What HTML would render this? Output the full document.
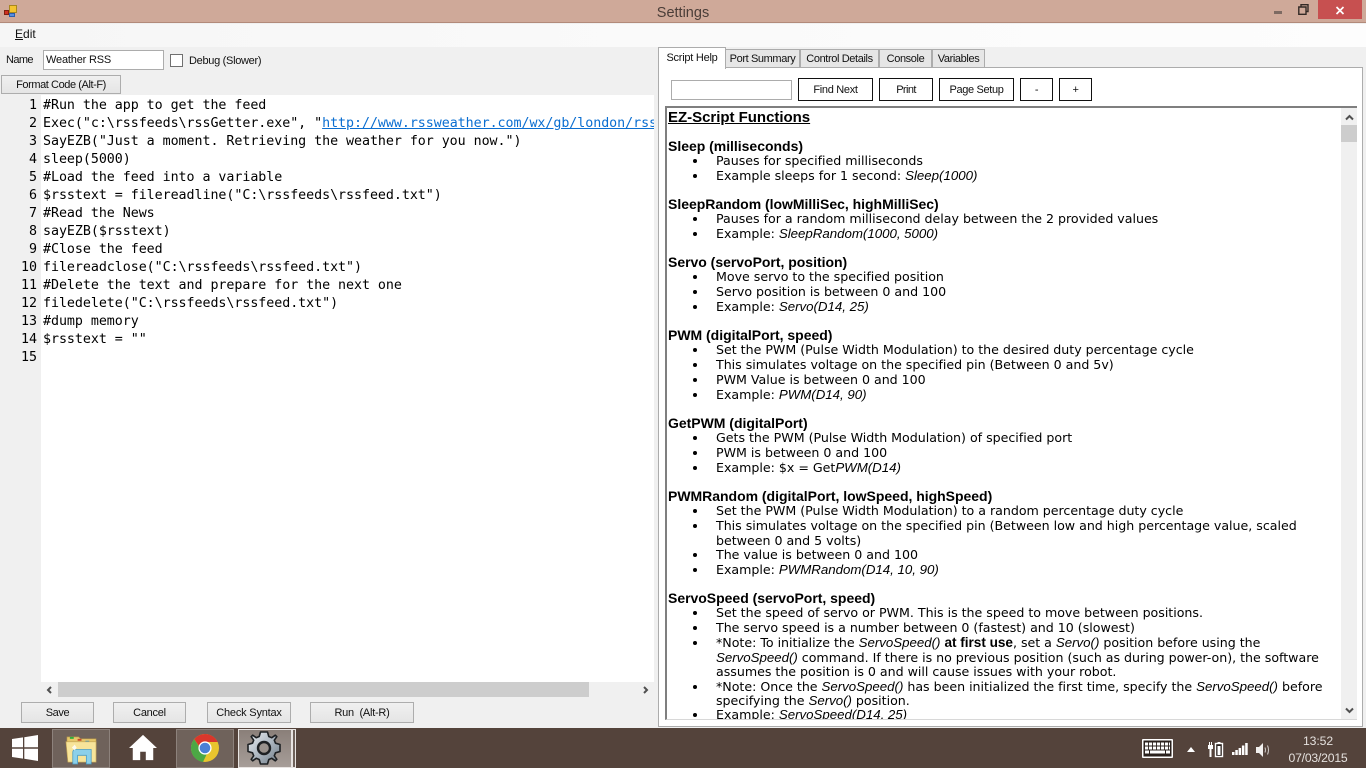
<!DOCTYPE html>
<html><head><meta charset="utf-8"><title>Settings</title>
<style>
html,body{margin:0;padding:0;width:1366px;height:768px;overflow:hidden;background:#f0f0f0}
body{position:relative;font-family:"Liberation Sans",sans-serif;font-size:11px;color:#111}
div{box-sizing:border-box}
.r{position:absolute}
.u{position:absolute;white-space:nowrap;letter-spacing:-.3px;line-height:14px;height:14px}
.b{position:absolute;box-sizing:border-box;border:1px solid #adadad;background:linear-gradient(#f0f0f0,#e5e5e5);text-align:center;white-space:nowrap;letter-spacing:-.25px;font-size:11px;line-height:21px;color:#111}
.k{position:absolute;box-sizing:border-box;border:1px solid #111;background:#fff;text-align:center;white-space:nowrap;letter-spacing:-.3px;line-height:22px;height:23px;top:78px}
.tab{position:absolute;box-sizing:border-box;top:49px;height:19px;border:1px solid #acacac;background:#e6e6e6;text-align:center;letter-spacing:-.38px;line-height:19px;white-space:nowrap}
.c{position:absolute;left:43px;font:13.33px/18px "DejaVu Sans Mono",monospace;letter-spacing:-.05px;white-space:pre;color:#000;height:18px}
.n{position:absolute;left:0;width:37px;text-align:right;font:13.33px/18px "DejaVu Sans Mono",monospace;color:#000}
#help{position:absolute;left:663px;top:108px;width:678px;height:611px;overflow:hidden}
#help div{position:absolute;white-space:nowrap;font:12.63px/15px "DejaVu Sans",sans-serif;color:#000;letter-spacing:-.02px}
#help .h{left:5px;font-family:"Liberation Sans",sans-serif;font-weight:bold;font-size:14px}
#help .l{left:53px}
#help .d{left:5px}
#help .d:before{content:"";position:absolute;left:25px;top:6px;width:4px;height:4px;border-radius:50%;background:#000}
#help .d span{margin-left:48px}
#help i{font-family:"Liberation Sans",sans-serif;font-size:13.3px}
#help b{font-family:"Liberation Sans",sans-serif;font-size:13.6px}
</style></head><body>

<!-- title bar -->
<div class="r" style="left:0;top:0;width:1366px;height:23px;background:#cfa999;border-bottom:1px solid #b28a7a"></div>
<svg class="r" style="left:3px;top:4px" width="15" height="14" viewBox="0 0 15 14">
<rect x="6.500" y="1.500" width="7" height="7" fill="#f4c430" stroke="#a8871f"/><rect x="1.500" y="6.500" width="4" height="4" fill="#d03020" stroke="#802010"/><rect x="6.500" y="9.500" width="5" height="3" fill="#5a8fe0" stroke="#2a5fb0"/></svg>
<div class="r" style="left:0;top:5px;width:1366px;text-align:center;font-size:14.500px;line-height:16px;color:#4a3d38">Settings</div>
<div class="r" style="left:1274px;top:11px;width:8px;height:3px;background:#7d6a62"></div>
<svg class="r" style="left:1298px;top:4px" width="11" height="11" viewBox="0 0 11 11"><path d="M3 2.500V.7H10V7.500H8M.8 3H8V10.300H.8Z" fill="none" stroke="#332a26" stroke-width="1.400"/></svg>
<div class="r" style="left:1318px;top:0;width:44px;height:19px;background:#c75050"></div>
<svg class="r" style="left:1335px;top:6px" width="10" height="9" viewBox="0 0 10 9"><path d="M1.500 1L8.500 8M8.500 1L1.500 8" stroke="#fff" stroke-width="1.700"/></svg>

<!-- menu -->
<div class="r" style="left:0;top:24px;width:1366px;height:23px;background:linear-gradient(90deg,#f6f6f6,#fafafa 50%,#fdfdfd)"></div>
<div class="u" style="left:15px;top:27px;font-size:12px;letter-spacing:0"><span style="text-decoration:underline">E</span>dit</div>

<!-- left top -->
<div class="u" style="left:6px;top:53px;letter-spacing:-.6px">Name</div>
<div class="r" style="left:43px;top:50px;width:121px;height:20px;border:1px solid #acacac;background:#fff;padding-left:2px;line-height:19px;letter-spacing:-.18px;white-space:nowrap">Weather RSS</div>
<div class="r" style="left:170px;top:54px;width:13px;height:13px;border:1px solid #707070;background:#fff"></div>
<div class="u" style="left:189px;top:54px">Debug (Slower)</div>
<div class="b" style="left:1px;top:75px;width:120px;height:19px;line-height:19px;letter-spacing:-.42px">Format Code (Alt-F)</div>

<!-- editor -->
<div class="r" style="left:41px;top:95px;width:613px;height:587px;background:#fff"></div>
<div class="r" style="left:0;top:97px;width:654px;height:272px;overflow:hidden">
<div class="n" style="top:-2px;height:0;overflow:hidden"></div>
<div class="n" style="top:-2px;height:0;overflow:hidden"></div>
<div class="n" style="top:0">1</div><div class="c" style="top:0">#Run the app to get the feed</div>
<div class="n" style="top:18px">2</div><div class="c" style="top:18px">Exec("c:\rssfeeds\rssGetter.exe", "<span style="color:#0a6ed1;text-decoration:underline">http://www.rssweather.com/wx/gb/london/rss.php</span></div>
<div class="n" style="top:36px">3</div><div class="c" style="top:36px">SayEZB("Just a moment. Retrieving the weather for you now.")</div>
<div class="n" style="top:54px">4</div><div class="c" style="top:54px">sleep(5000)</div>
<div class="n" style="top:72px">5</div><div class="c" style="top:72px">#Load the feed into a variable</div>
<div class="n" style="top:90px">6</div><div class="c" style="top:90px">$rsstext = filereadline("C:\rssfeeds\rssfeed.txt")</div>
<div class="n" style="top:108px">7</div><div class="c" style="top:108px">#Read the News</div>
<div class="n" style="top:126px">8</div><div class="c" style="top:126px">sayEZB($rsstext)</div>
<div class="n" style="top:144px">9</div><div class="c" style="top:144px">#Close the feed</div>
<div class="n" style="top:162px">10</div><div class="c" style="top:162px">filereadclose("C:\rssfeeds\rssfeed.txt")</div>
<div class="n" style="top:180px">11</div><div class="c" style="top:180px">#Delete the text and prepare for the next one</div>
<div class="n" style="top:198px">12</div><div class="c" style="top:198px">filedelete("C:\rssfeeds\rssfeed.txt")</div>
<div class="n" style="top:216px">13</div><div class="c" style="top:216px">#dump memory</div>
<div class="n" style="top:234px">14</div><div class="c" style="top:234px">$rsstext = ""</div>
<div class="n" style="top:252px">15</div>
</div>

<!-- horiz scrollbar -->
<div class="r" style="left:41px;top:682px;width:613px;height:15px;background:#f0f0f0"></div>
<div class="r" style="left:58px;top:682px;width:531px;height:15px;background:#cdcdcd"></div>
<svg class="r" style="left:46px;top:686px" width="7" height="8" viewBox="0 0 7 8"><path d="M5 1L2 4L5 7" fill="none" stroke="#505050" stroke-width="2"/></svg>
<svg class="r" style="left:642px;top:686px" width="7" height="8" viewBox="0 0 7 8"><path d="M2 1L5 4L2 7" fill="none" stroke="#505050" stroke-width="2"/></svg>

<!-- bottom buttons -->
<div class="b" style="left:21px;top:702px;width:73px;height:21px;letter-spacing:-.4px">Save</div>
<div class="b" style="left:113px;top:702px;width:73px;height:21px">Cancel</div>
<div class="b" style="left:207px;top:702px;width:84px;height:21px;letter-spacing:-.2px">Check Syntax</div>
<div class="b" style="left:310px;top:702px;width:104px;height:21px">Run&nbsp; (Alt-R)</div>

<!-- tab panel -->
<div class="r" style="left:658px;top:67px;width:705px;height:660px;border:1px solid #acacac;background:#fff"></div>
<div class="tab" style="left:725px;width:75px">Port Summary</div>
<div class="tab" style="left:800px;width:79px">Control Details</div>
<div class="tab" style="left:879px;width:53px">Console</div>
<div class="tab" style="left:932px;width:53px">Variables</div>
<div class="r" style="left:658px;top:47px;width:68px;height:22px;border:1px solid #acacac;border-bottom:0;background:#fff;text-align:center;line-height:20px;letter-spacing:-.25px;white-space:nowrap">Script Help</div>

<div class="r" style="left:671px;top:80px;width:121px;height:20px;border:1px solid #acacac;background:#fff"></div>
<div class="k" style="left:798px;width:75px">Find Next</div>
<div class="k" style="left:879px;width:54px;letter-spacing:-.6px">Print</div>
<div class="k" style="left:939px;width:75px;letter-spacing:-.35px">Page Setup</div>
<div class="k" style="left:1020px;width:33px">-</div>
<div class="k" style="left:1059px;width:33px">+</div>

<!-- help box -->
<div class="r" style="left:665px;top:106px;width:692px;height:614px;background:#fff;border-top:2px solid #7f7f7f;border-left:2px solid #7f7f7f;border-bottom:1px solid #d8d8d8"></div>
<div class="r" style="left:1341px;top:108px;width:16px;height:611px;background:#f0f0f0"></div>
<div class="r" style="left:1341px;top:125px;width:16px;height:17px;background:#cdcdcd"></div>
<svg class="r" style="left:1345px;top:114px" width="9" height="7" viewBox="0 0 9 7"><path d="M1 5.500L4.500 2L8 5.500" fill="none" stroke="#505050" stroke-width="2"/></svg>
<svg class="r" style="left:1345px;top:707px" width="9" height="7" viewBox="0 0 9 7"><path d="M1 1.500L4.500 5L8 1.500" fill="none" stroke="#505050" stroke-width="2"/></svg>

<div id="help">
<div class="h" style="top:2px;text-decoration:underline;font-size:15px">EZ-Script Functions</div>
<div class="h" style="top:31px">Sleep (milliseconds)</div>
<div class="d" style="top:45px"><span>Pauses for specified milliseconds</span></div>
<div class="d" style="top:60px"><span>Example sleeps for 1 second: <i>Sleep(1000)</i></span></div>
<div class="h" style="top:89px">SleepRandom (lowMilliSec, highMilliSec)</div>
<div class="d" style="top:103px"><span>Pauses for a random millisecond delay between the 2 provided values</span></div>
<div class="d" style="top:118px"><span>Example: <i>SleepRandom(1000, 5000)</i></span></div>
<div class="h" style="top:147px">Servo (servoPort, position)</div>
<div class="d" style="top:161px"><span>Move servo to the specified position</span></div>
<div class="d" style="top:176px"><span>Servo position is between 0 and 100</span></div>
<div class="d" style="top:191px"><span>Example: <i>Servo(D14, 25)</i></span></div>
<div class="h" style="top:220px">PWM (digitalPort, speed)</div>
<div class="d" style="top:234px"><span>Set the PWM (Pulse Width Modulation) to the desired duty percentage cycle</span></div>
<div class="d" style="top:249px"><span>This simulates voltage on the specified pin (Between 0 and 5v)</span></div>
<div class="d" style="top:264px"><span>PWM Value is between 0 and 100</span></div>
<div class="d" style="top:279px"><span>Example: <i>PWM(D14, 90)</i></span></div>
<div class="h" style="top:308px">GetPWM (digitalPort)</div>
<div class="d" style="top:322px"><span>Gets the PWM (Pulse Width Modulation) of specified port</span></div>
<div class="d" style="top:337px"><span>PWM is between 0 and 100</span></div>
<div class="d" style="top:352px"><span>Example: $x = Get<i>PWM(D14)</i></span></div>
<div class="h" style="top:381px">PWMRandom (digitalPort, lowSpeed, highSpeed)</div>
<div class="d" style="top:395px"><span>Set the PWM (Pulse Width Modulation) to a random percentage duty cycle</span></div>
<div class="d" style="top:410px"><span>This simulates voltage on the specified pin (Between low and high percentage value, scaled</span></div>
<div class="l" style="top:425px">between 0 and 5 volts)</div>
<div class="d" style="top:439px"><span>The value is between 0 and 100</span></div>
<div class="d" style="top:454px"><span>Example: <i>PWMRandom(D14, 10, 90)</i></span></div>
<div class="h" style="top:483px">ServoSpeed (servoPort, speed)</div>
<div class="d" style="top:497px"><span>Set the speed of servo or PWM. This is the speed to move between positions.</span></div>
<div class="d" style="top:512px"><span>The servo speed is a number between 0 (fastest) and 10 (slowest)</span></div>
<div class="d" style="top:527px"><span>*Note: To initialize the <i>ServoSpeed()</i> <b>at first use</b>, set a <i>Servo()</i> position before using the</span></div>
<div class="l" style="top:542px"><i>ServoSpeed()</i> command. If there is no previous position (such as during power-on), the software</div>
<div class="l" style="top:556px">assumes the position is 0 and will cause issues with your robot.</div>
<div class="d" style="top:571px"><span>*Note: Once the <i>ServoSpeed()</i> has been initialized the first time, specify the <i>ServoSpeed()</i> before</span></div>
<div class="l" style="top:585px">specifying the <i>Servo()</i> position.</div>
<div class="d" style="top:599px"><span>Example: <i>ServoSpeed(D14, 25)</i></span></div>
</div>

<!-- taskbar -->
<div class="r" style="left:0;top:728px;width:1366px;height:40px;background:#54433b"></div>
<svg class="r" style="left:12px;top:735px" width="27" height="26" viewBox="0 0 27 26"><path d="M0 4L11 2.400V12.300H0ZM12.300 2.200L26 0V12.300H12.300ZM0 13.700H11V23.600L0 22ZM12.300 13.700H26V26L12.300 23.800Z" fill="#fff"/></svg>
<div class="r" style="left:52px;top:729px;width:58px;height:39px;background:#6f625b;border:1px solid #8d827c"></div>
<svg class="r" style="left:65px;top:734px" width="33" height="31" viewBox="0 0 34 32">
<path d="M2 3H14L16 5H32V16H2Z" fill="#e7c76a" stroke="#b39448" stroke-width=".6"/>
<rect x="5" y="3" width="4" height="2" fill="#2fae3c"/><rect x="13" y="5" width="4" height="2" fill="#c84b2a"/><rect x="21" y="7" width="4" height="2" fill="#2c9be0"/>
<path d="M1 8H32V29H3Z" fill="#f7e49a" stroke="#c6a757" stroke-width=".7"/>
<path d="M8 31V19Q8 16 11 16H27V31H22V22H13V31Z" fill="#8cd0ea" stroke="#4b9cc4" stroke-width=".8"/>
<path d="M7 14L10 11L12 14L10 17Z" fill="#fff" opacity=".8"/></svg>
<svg class="r" style="left:128px;top:734px" width="30" height="27" viewBox="0 0 32 29"><path d="M16 1L31 15H27V28H19V19H13V28H5V15H1Z" fill="#fff"/></svg>
<div class="r" style="left:176px;top:729px;width:58px;height:39px;background:#6f625b;border:1px solid #8d827c"></div>
<svg class="r" style="left:190px;top:733px" width="30" height="30" viewBox="0 0 30 30">
<circle cx="15" cy="15" r="14" fill="#e8c52e"/>
<path d="M15 1A14 14 0 0 1 27.600 9H15A6 6 0 0 0 9.200 13.400L4.200 6.200A14 14 0 0 1 15 1Z" fill="#d9372c"/>
<path d="M4.200 6.200L10 15A6 6 0 0 0 17 20.600L13 29A14 14 0 0 1 4.200 6.200Z" fill="#4ca845"/>
<circle cx="15" cy="15" r="6.600" fill="#fff"/><circle cx="15" cy="15" r="5.300" fill="#4a80d6"/></svg>
<div class="r" style="left:238px;top:729px;width:54px;height:39px;background:linear-gradient(#8a7f79,#a69d98);border:1px solid #e8e4e2"></div>
<div class="r" style="left:292px;top:729px;width:4px;height:39px;background:#6f625b;border:1px solid #e8e4e2"></div>
<svg class="r" style="left:247px;top:731px" width="34" height="34" viewBox="-17 -17 34 34">
<defs><linearGradient id="gg" x1="0" y1="0" x2="1" y2="1"><stop offset="0" stop-color="#eef1f4"/><stop offset=".5" stop-color="#aeb8c2"/><stop offset="1" stop-color="#6f7a85"/></linearGradient></defs>
<path d="M-3.500-16H3.500L4.800-11.500L7.800-10.300L11.300-12.800L12.800-11.300L10.300-7.800L11.500-4.800L16-3.500V3.500L11.500 4.800L10.300 7.800L12.800 11.300L11.300 12.800L7.800 10.300L4.800 11.500L3.500 16H-3.500L-4.800 11.500L-7.800 10.300L-11.300 12.800L-12.800 11.300L-10.300 7.800L-11.500 4.800L-16 3.500V-3.500L-11.500-4.800L-10.300-7.800L-12.800-11.300L-11.300-12.800L-7.800-10.300L-4.800-11.500Z" fill="url(#gg)" stroke="#1d2023" stroke-width="1.600" stroke-linejoin="round"/>
<circle r="6" fill="#9a928d" stroke="#1d2023" stroke-width="2.400"/></svg>

<!-- tray -->
<svg class="r" style="left:1142px;top:739px" width="31" height="19" viewBox="0 0 31 19"><rect width="31" height="19" rx="1" fill="#fff"/><rect x="1.500" y="1.500" width="28" height="16" fill="#2a211d"/><path d="M3 5H28M3 9H28" stroke="#fff" stroke-width="3" stroke-dasharray="3.100 .9"/><path d="M3 13H7M8 13H23M24 13H28" stroke="#fff" stroke-width="3"/></svg>
<svg class="r" style="left:1187px;top:747px" width="8" height="5" viewBox="0 0 8 5"><path d="M4 0L8 5H0Z" fill="#fff"/></svg>
<svg class="r" style="left:1208px;top:741px" width="16" height="17" viewBox="0 0 16 17"><path d="M1 1H2V4H3V1H4V4H5V8H3.500V16H1.500V8H0V4H1Z" fill="#fff"/><rect x="7.500" y="2.500" width="7" height="13" fill="#2a211d" stroke="#fff" stroke-width="1.400"/><rect x="9.500" y="1" width="3" height="1.500" fill="#fff"/><rect x="9.500" y="5" width="3" height="9" fill="#fff"/></svg>
<svg class="r" style="left:1232px;top:743px" width="16" height="12" viewBox="0 0 16 12"><path d="M0 9h2.500v3H0zM3.300 7h2.500v5H3.300zM6.600 5h2.500v7H6.600zM9.900 2.500h2.500V12H9.900zM13.200 0h2.500v12h-2.500z" fill="#fff"/></svg>
<svg class="r" style="left:1256px;top:743px" width="15" height="14" viewBox="0 0 15 14"><path d="M0 4H3L7 0V14L3 10H0Z" fill="#f2f0ee"/><path d="M9 4.500Q10 7 9 9.500M11.500 2.500Q13.500 7 11.500 11.500" fill="none" stroke="#d0cbc8" stroke-width="1"/></svg>
<div class="r" style="left:1280px;top:734px;width:76px;text-align:center;color:#e4e0dd;font-size:12.200px;line-height:15px;letter-spacing:-.1px">13:52</div>
<div class="r" style="left:1280px;top:751px;width:76px;text-align:center;color:#e4e0dd;font-size:12.200px;line-height:15px;letter-spacing:-.2px">07/03/2015</div>
</body></html>
